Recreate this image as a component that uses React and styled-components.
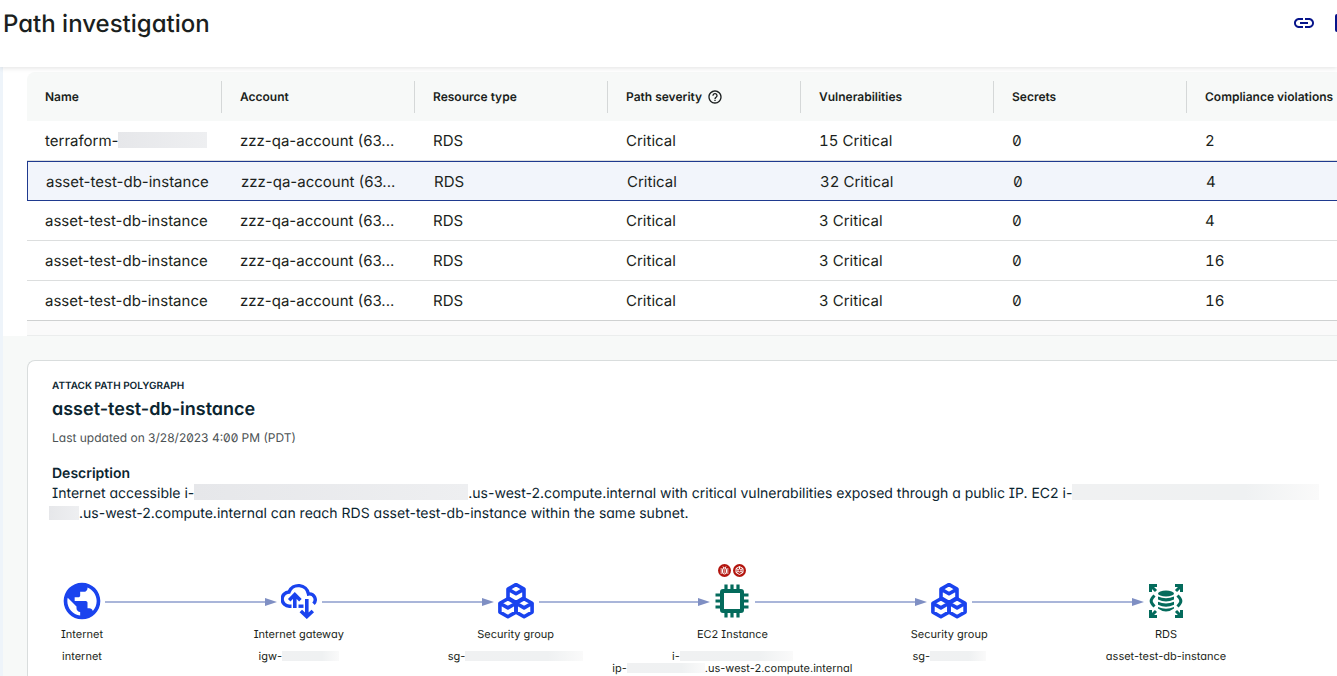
import React from "react";
import styled, { createGlobalStyle } from "styled-components";
import { MdLink, MdHelpOutline, MdPublic } from "react-icons/md";

const GlobalStyle = createGlobalStyle`
  * {
    box-sizing: border-box;
  }

  body {
    margin: 0;
    background: #f7f9f8;
    color: #1b1f20;
    font-family: Inter, "Liberation Sans", sans-serif;
    text-rendering: geometricPrecision;
  }
`;

const Page = styled.div`
  min-height: 100vh;
  overflow: hidden;
`;

const TopBar = styled.header`
  position: relative;
  z-index: 1;
  display: flex;
  justify-content: space-between;
  height: 67px;
  padding: 9px 0 0 3px;
  background: #fff;
  box-shadow: 0 1px 5px rgba(0, 0, 0, 0.12);
`;

const PageTitle = styled.h1`
  margin: 0;
  font-size: 24px;
  line-height: 30px;
  font-weight: 500;
  font-feature-settings: "cv11";
`;

const Actions = styled.div`
  display: flex;
  align-items: center;
  gap: 18px;
  height: 28px;
  margin-right: -21px;
`;

const IconButton = styled.button`
  display: flex;
  padding: 0;
  border: 0;
  background: none;
  color: #06148a;
`;

const Main = styled.main`
  border-left: 3px solid #eef4fa;
`;

const TableSection = styled.section`
  padding: 5px 0 0 24px;
  background: #fff;
`;

const TableFooter = styled.div`
  height: 15px;
  background: #fafafa;
  border-bottom: 1px solid #ebeded;
`;

const PathTable = styled.table`
  width: 100%;
  border-spacing: 0;
  white-space: nowrap;
  font-size: 15px;
  font-feature-settings: "zero";
`;

const HeadCell = styled.th`
  min-width: 193px;
  height: 49px;
  padding: 0;
  background: #f7f9f8;
  font-size: 12px;
  font-weight: 600;
  text-align: left;

  &:first-child {
    min-width: 195px;
    border-top-left-radius: 8px;
  }
`;

const HeadLabel = styled.div`
  display: flex;
  align-items: center;
  gap: 5px;
  height: 32px;
  padding-left: 18px;
  border-right: 1px solid #d5d8d8;
`;

const Cell = styled.td`
  height: 40px;
  padding: 0 0 0 18px;
  border-bottom: 1px solid #dcdede;
`;

const NumberCell = styled(Cell)`
  font-feature-settings: "zero", "tnum";
`;

const Row = styled.tr`
  &:last-child ${Cell} {
    border-bottom-color: #cfd1d1;
  }

  &[aria-selected="true"] ${Cell} {
    padding-left: 19px;
    background: #f2f5fb;
    border-top: 1px solid #1f3a8f;
    border-bottom: 1px solid #1f3a8f;
  }

  &[aria-selected="true"] ${Cell}:first-child {
    padding-left: 18px;
    border-left: 1px solid #1f3a8f;
  }
`;

const Redacted = styled.span`
  display: inline-block;
  width: ${props => props.$width}px;
  height: ${props => props.$height || 16}px;
  vertical-align: -2px;
  background: ${props =>
    props.$fade
      ? "linear-gradient(90deg, #f0f1f2, #eff1f2 70%, #fafafa)"
      : "linear-gradient(90deg, #e6e7ea, #eeeff1)"};
`;

const Card = styled.section`
  margin: 24px 0 0 24px;
  padding: 18px 0 24px 24px;
  background: #fff;
  border: 1px solid #d9dddd;
  border-right: 0;
  border-top-left-radius: 8px;
  color: #0b2530;
  font-feature-settings: "cv11", "cv08", "zero";
`;

const Overline = styled.p`
  margin: 0;
  font-size: 10px;
  line-height: 14px;
  font-weight: 600;
`;

const CardTitle = styled.h2`
  margin: 4px 0 0;
  font-size: 18px;
  line-height: 26px;
  font-weight: 600;
`;

const Updated = styled.p`
  margin: 6px 0 0;
  color: #4c5254;
  font-size: 12px;
  line-height: 18px;
`;

const SubTitle = styled.h3`
  margin: 17px 0 0;
  font-size: 14px;
  line-height: 20px;
  font-weight: 600;
`;

const Description = styled.p`
  margin: 0;
  font-size: 14px;
  line-height: 20px;
  white-space: nowrap;
`;

const SecondLine = styled.span`
  display: block;
  margin-left: -3px;
`;

const Graph = styled.ol`
  display: flex;
  align-items: flex-start;
  margin: 0;
  padding: 59px 153px 0 12px;
  list-style: none;
  color: #1b1f20;
  font-size: 11px;
`;

const Step = styled.li`
  display: flex;
  flex: ${props => (props.$last ? "0 0 36px" : "1 1 0")};
`;

const Node = styled.div`
  position: relative;
  display: flex;
  flex-direction: column;
  align-items: center;
  width: 36px;
  flex: none;
  white-space: nowrap;
`;

const NodeIcon = styled.div`
  display: flex;
  align-items: center;
  justify-content: center;
  height: 36px;
  color: ${props => props.$color};
`;

const NodeLabel = styled.div`
  margin: 8px 0 9px;
  line-height: 14px;
`;

const NodeCaption = styled.div`
  display: flex;
  align-items: center;
  line-height: 12px;
`;

const Badges = styled.div`
  position: absolute;
  top: -19px;
  display: flex;
  gap: 2px;
`;

const Connector = styled.div`
  display: flex;
  align-items: center;
  flex: 1;
  height: 38px;
  margin: 0 4px 0 5px;
`;

const Line = styled.span`
  flex: 1;
  height: 2px;
  background: #a9b5d9;
`;

const Arrow = () => (
  <Connector>
    <Line />
    <svg width="12" height="8" viewBox="0 0 12 8">
      <path d="M0 0L12 4L0 8Z" fill="#7f8fc3" />
    </svg>
  </Connector>
);

const GatewayIcon = () => (
  <svg width="36" height="36" viewBox="0 0 36 36" fill="none" stroke="currentColor" strokeWidth="3.400">
    <path d="M10.500 23.200H8.500A6.800 6.800 0 0 1 8 9A10.200 10.200 0 0 1 27.500 11A5.800 5.800 0 0 1 32.500 20.800" />
    <path d="M13.800 24.900V12M8.200 17.200L13.800 11.600L19.400 17.200" strokeWidth="3.600" />
    <path d="M25.800 16V34M19.800 28L25.800 33.600L31.800 28" strokeWidth="3.600" />
    <path d="M17.500 23.200H22.500" />
  </svg>
);

const cube = (x, y) =>
  `M${x} ${y}l8 4.600v8.800l-8 4.600l-8 -4.600v-8.800zM${x - 8} ${y + 4.6}l8 4.600l8 -4.600`;

const GroupIcon = () => (
  <svg width="36" height="36" viewBox="0 0 36 36" fill="none" stroke="currentColor" strokeWidth="3.600" strokeLinejoin="round">
    <path d={cube(18, 1.5)} />
    <path d={cube(9.9, 15.7)} />
    <path d={cube(26.1, 15.7)} />
  </svg>
);

const ChipIcon = () => (
  <svg width="34" height="34" viewBox="0 0 34 34" fill="none" stroke="currentColor">
    <rect x="7" y="7" width="20" height="20" rx="1" strokeWidth="4" />
    <path
      d="M11 0.500V6M17 0.500V6M23 0.500V6M11 28V33.500M17 28V33.500M23 28V33.500M0.500 11H6M0.500 17H6M0.500 23H6M28 11H33.500M28 17H33.500M28 23H33.500"
      strokeWidth="3.200"
    />
  </svg>
);

const DatabaseIcon = () => (
  <svg width="34" height="34" viewBox="0 0 34 34" fill="none" stroke="currentColor" strokeWidth="3">
    <ellipse cx="17" cy="9.500" rx="8" ry="3" fill="currentColor" stroke="none" />
    <path
      d="M9 12.500q8 3.400 16 0v3q-8 4 -16 0zM9 17.700q8 3.600 16 0v3q-8 4 -16 0zM9 23q8 3.600 16 0v1.500q-8 6 -16 0z"
      fill="currentColor"
      stroke="none"
    />
    <path d="M1.500 8V1.500H8M1.500 1.500L7 7M26 1.500H32.500V8M32.500 1.500L27 7M1.500 26V32.500H8M1.500 32.500L7 27M26 32.500H32.500V26M32.500 32.500L27 27" />
    <path d="M5.500 11.500C1 16 1 18 5.500 22.500M28.500 11.500C33 16 33 18 28.500 22.500" />
  </svg>
);

const BugBadge = () => (
  <svg width="13" height="13" viewBox="0 0 26 26" fill="none" stroke="#fff" strokeWidth="2">
    <circle cx="13" cy="13" r="13" fill="#b3150e" stroke="none" />
    <rect x="9" y="8" width="8" height="12" rx="4" />
    <path d="M10 5l2 3M16 5l-2 3M5 10h4M5 14h4M5 18h4M17 10h4M17 14h4M17 18h4M11 12h4M11 16h4" />
  </svg>
);

const RiskBadge = () => (
  <svg width="13" height="13" viewBox="0 0 26 26" fill="none" stroke="#fff" strokeWidth="2">
    <circle cx="13" cy="13" r="13" fill="#b3150e" stroke="none" />
    <path d="M13 5l7 4v8l-7 4l-7 -4v-8z" />
    <circle cx="13" cy="13" r="3" />
    <path d="M13 5v5M6 9l4 2M20 9l-4 2M6 17l4 -2M20 17l-4 -2" />
  </svg>
);

const columns = [
  "Name",
  "Account",
  "Resource type",
  "Path severity",
  "Vulnerabilities",
  "Secrets",
  "Compliance violations"
];

const rows = [
  { name: "terraform-", redacted: true, vulnerabilities: "15 Critical", violations: 2 },
  { name: "asset-test-db-instance", selected: true, vulnerabilities: "32 Critical", violations: 4 },
  { name: "asset-test-db-instance", vulnerabilities: "3 Critical", violations: 4 },
  { name: "asset-test-db-instance", vulnerabilities: "3 Critical", violations: 16 },
  { name: "asset-test-db-instance", vulnerabilities: "3 Critical", violations: 16 }
];

const BLUE = "#1a43ee";
const GREEN = "#046b5c";

const steps = [
  { label: "Internet", icon: <MdPublic size={44} />, color: BLUE, captions: [["internet"]] },
  { label: "Internet gateway", icon: <GatewayIcon />, color: BLUE, captions: [["igw-", 57]] },
  { label: "Security group", icon: <GroupIcon />, color: BLUE, captions: [["sg-", 118]] },
  {
    label: "EC2 Instance",
    icon: <ChipIcon />,
    color: GREEN,
    badges: true,
    captions: [["i-", 113], ["ip-", 78, ".us-west-2.compute.internal"]]
  },
  { label: "Security group", icon: <GroupIcon />, color: BLUE, captions: [["sg-", 56]] },
  { label: "RDS", icon: <DatabaseIcon />, color: GREEN, captions: [["asset-test-db-instance"]] }
];

const App = () => (
  <Page>
    <GlobalStyle />
    <TopBar>
      <PageTitle>Path investigation</PageTitle>
      <Actions>
        <IconButton aria-label="Copy link">
          <MdLink size={24} />
        </IconButton>
        <IconButton aria-label="Open panel">
          <svg width="24" height="24" viewBox="0 0 24 24" fill="none" stroke="currentColor" strokeWidth="2">
            <rect x="2" y="4" width="18" height="16" rx="1" />
          </svg>
        </IconButton>
      </Actions>
    </TopBar>
    <Main>
      <TableSection>
        <PathTable>
          <thead>
            <tr>
              {columns.map(column => (
                <HeadCell key={column} scope="col">
                  <HeadLabel>
                    {column}
                    {column === "Path severity" && <MdHelpOutline size={16} />}
                  </HeadLabel>
                </HeadCell>
              ))}
            </tr>
          </thead>
          <tbody>
            {rows.map((row, i) => (
              <Row key={i} aria-selected={!!row.selected}>
                <Cell>
                  {row.name}
                  {row.redacted && <Redacted $width={89} />}
                </Cell>
                <Cell>zzz-qa-account (63...</Cell>
                <Cell>RDS</Cell>
                <Cell>Critical</Cell>
                <NumberCell>{row.vulnerabilities}</NumberCell>
                <NumberCell>0</NumberCell>
                <NumberCell>{row.violations}</NumberCell>
              </Row>
            ))}
          </tbody>
        </PathTable>
        <TableFooter />
      </TableSection>
      <Card>
        <Overline>ATTACK PATH POLYGRAPH</Overline>
        <CardTitle>asset-test-db-instance</CardTitle>
        <Updated>Last updated on 3/28/2023 4:00 PM (PDT)</Updated>
        <SubTitle>Description</SubTitle>
        <Description>
          Internet accessible i-
          <Redacted $width={274} />
          .us-west-2.compute.internal with critical vulnerabilities exposed through a public IP. EC2 i-
          <Redacted $width={247} $fade />
          <SecondLine>
            <Redacted $width={30} $height={14} />
            .us-west-2.compute.internal can reach RDS asset-test-db-instance within the same subnet.
          </SecondLine>
        </Description>
        <Graph>
          {steps.map((step, i) => (
            <Step key={i} $last={i === steps.length - 1}>
              <Node>
                {step.badges && (
                  <Badges>
                    <BugBadge />
                    <RiskBadge />
                  </Badges>
                )}
                <NodeIcon $color={step.color}>{step.icon}</NodeIcon>
                <NodeLabel>{step.label}</NodeLabel>
                {step.captions.map(([before, width, after]) => (
                  <NodeCaption key={before}>
                    {before}
                    {width && <Redacted $width={width} $height={10} $fade />}
                    {after}
                  </NodeCaption>
                ))}
              </Node>
              {i < steps.length - 1 && <Arrow />}
            </Step>
          ))}
        </Graph>
      </Card>
    </Main>
  </Page>
);

export default App;
